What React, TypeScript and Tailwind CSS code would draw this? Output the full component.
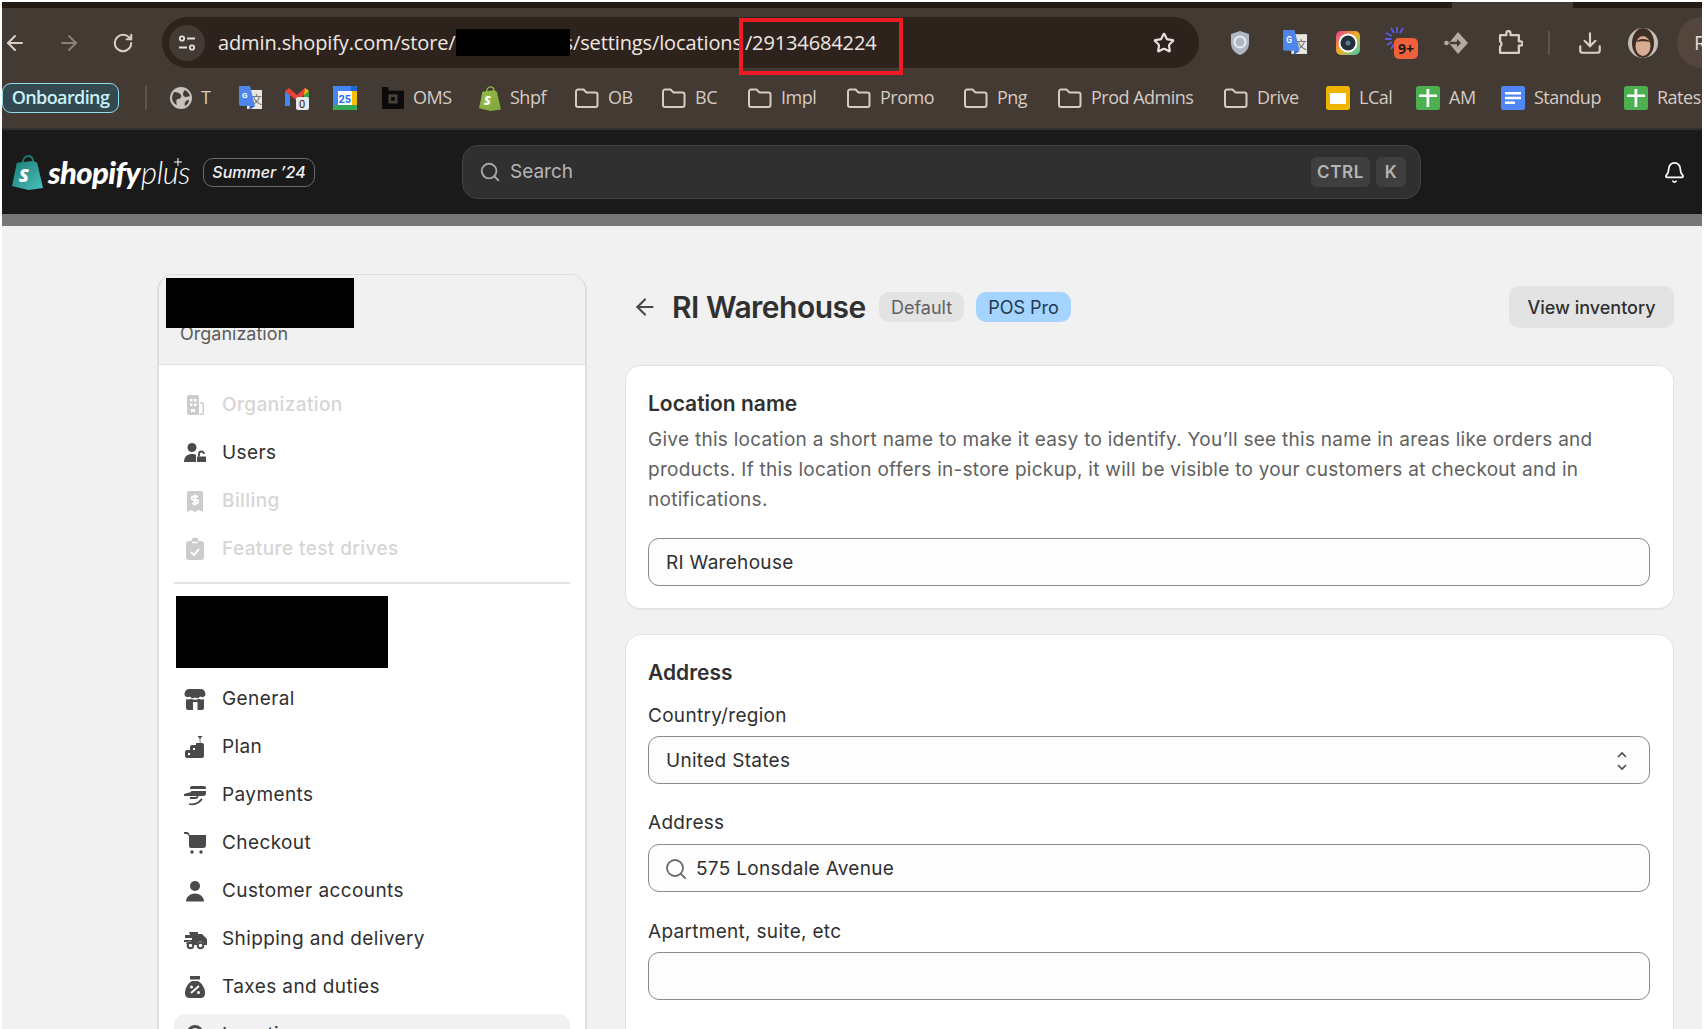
import { ArrowLeft, ArrowRight, Bell, Download, RotateCw, Search, Star } from 'lucide-react';
import type { ReactNode } from 'react';

const Folder = () => (
  <svg viewBox="0 0 24 22" className="w-[25px] h-[22px]" fill="none" stroke="#d6ccc4" strokeWidth="2">
    <path d="M1.5 4.5a2 2 0 0 1 2-2h5.5l3 3h9a2 2 0 0 1 2 2v10.5a2 2 0 0 1-2 2h-17.500a2 2 0 0 1-2-2z" />
  </svg>
);

const Translate = ({ size = 'w-[24px] h-[24px]' }: { size?: string }) => (
  <svg viewBox="0 0 24 24" className={size}>
    <rect x="9" y="4" width="15" height="19" fill="#e9e6e2" />
    <text x="13" y="18" fontSize="11" fill="#666" fontFamily="Noto Sans CJK SC, sans-serif">文</text>
    <path d="M1 0h11l5 20H3a2 2 0 0 1-2-2z" fill="#4f86ec" />
    <path d="M12 20l-1 4 6-4z" fill="#2c5fc0" />
    <text x="4" y="12" fontSize="8" fontWeight="700" fill="#fff" fontFamily="Roboto, sans-serif">G</text>
  </svg>
);

const Gmail = () => (
  <svg viewBox="0 0 24 24" className="w-[24px] h-[24px]">
    <path d="M0 5v15h5V9z" fill="#4285f4" />
    <path d="M0 5l4-3 8 7 8-7 4 3-12 10z" fill="#ea4335" />
    <path d="M19 9l5-4v8h-5z" fill="#34a853" />
    <path d="M20 2l4 3-5 4z" fill="#fbbc04" />
    <rect x="11" y="11" width="13" height="13" rx="2" fill="#e8e8e8" />
    <text x="14" y="22" fontSize="11" fill="#1a1a1a" fontFamily="Roboto, sans-serif">0</text>
  </svg>
);

const Calendar = () => (
  <svg viewBox="0 0 24 24" className="w-[24px] h-[24px]">
    <rect width="24" height="24" rx="2" fill="#fff" />
    <path d="M0 2a2 2 0 0 1 2-2h16v5H0z" fill="#4285f4" />
    <path d="M0 5h5v14H0z" fill="#4285f4" />
    <path d="M19 5h5v14h-5z" fill="#fbbc04" />
    <path d="M18 0h4a2 2 0 0 1 2 2v3h-6z" fill="#1967d2" />
    <path d="M0 19h24v3a2 2 0 0 1-2 2H2a2 2 0 0 1-2-2z" fill="#34a853" />
    <text x="5.500" y="16.500" fontSize="11" fontWeight="700" fill="#1a73e8" fontFamily="Roboto, sans-serif">25</text>
  </svg>
);

// black "b" mark, top right is notched out
const Bits = () => (
  <svg viewBox="0 0 24 24" className="w-[22px] h-[22px]">
    <path d="M0 0h7v4h17v20H0z" fill="#0b0b0b" />
    <rect x="7" y="8" width="10" height="10" fill="#4a4037" />
    <rect x="10" y="11" width="4" height="4" fill="#0b0b0b" />
  </svg>
);

const ShopBag = ({ size, top, bottom }: { size: string; top: string; bottom: string }) => (
  <svg viewBox="0 0 32 36" className={size}>
    <defs>
      <linearGradient id={`bag${top}`} x1="0" y1="0" x2="1" y2="1">
        <stop offset="0" stopColor={top} />
        <stop offset="1" stopColor={bottom} />
      </linearGradient>
    </defs>
    <path d="M11 9c0-4 2-8 6-8s5 4 5 8" fill="none" stroke={top} strokeWidth="2" />
    <path d="M5 8l17-2 4 2 6 26-15 2-17-4z" fill={`url(#bag${top})`} />
    <text x="7" y="28" fontSize="19" fontWeight="800" fill="#fff" fontStyle="italic" fontFamily="Open Sans, sans-serif">S</text>
  </svg>
);

const Square = ({ color, children }: { color: string; children: ReactNode }) => (
  <svg viewBox="0 0 24 24" className="w-[24px] h-[24px]">
    <rect width="24" height="24" rx="2.500" fill={color} />
    {children}
  </svg>
);

const Sheet = () => (
  <Square color="#4caf50">
    <path d="M3 8.500h18v2.500H3z M10.500 3h2.800v18h-2.800z" fill="#fff" />
  </Square>
);

const Globe = () => (
  <svg viewBox="0 0 22 22" className="w-[22px] h-[22px]">
    <circle cx="11" cy="11" r="11" fill="#c9c2bc" />
    <path d="M4 5c3 0 6 1 7 3s-1 4-3 4-2 3-1 6c-3-1-5-4-5-7 0-2 1-4 2-6z M15 3c2 1 4 3 5 6l-4 1c-2 0-3-1-3-3s1-3 2-4z M19 13c0 3-2 5-4 6-1-2 0-4 1-5s2-1 3-1z" fill="#433a33" />
  </svg>
);

const bookmarks: { icon: ReactNode; label: string; w: string }[] = [
  { icon: <Globe />, label: 'T', w: 'w-[68px]' },
  { icon: <Translate />, label: '', w: 'w-[47px]' },
  { icon: <Gmail />, label: '', w: 'w-[48px]' },
  { icon: <Calendar />, label: '', w: 'w-[49px]' },
  { icon: <Bits />, label: 'OMS', w: 'w-[97px]' },
  { icon: <ShopBag size="w-[22px] h-[25px]" top="#95bf47" bottom="#7ea53a" />, label: 'Shpf', w: 'w-[95px]' },
  { icon: <Folder />, label: 'OB', w: 'w-[87px]' },
  { icon: <Folder />, label: 'BC', w: 'w-[86px]' },
  { icon: <Folder />, label: 'Impl', w: 'w-[99px]' },
  { icon: <Folder />, label: 'Promo', w: 'w-[117px]' },
  { icon: <Folder />, label: 'Png', w: 'w-[94px]' },
  { icon: <Folder />, label: 'Prod Admins', w: 'w-[166px]' },
  { icon: <Folder />, label: 'Drive', w: 'w-[103px]' },
  {
    icon: (
      <Square color="#f0b400">
        <rect x="4" y="7" width="16" height="11" fill="#fff" />
      </Square>
    ),
    label: 'LCal',
    w: 'w-[90px]',
  },
  { icon: <Sheet />, label: 'AM', w: 'w-[85px]' },
  {
    icon: (
      <Square color="#4f86f7">
        <path d="M4 6h16v2.500H4z M4 10.800h16v2.500H4z M4 15.600h10v2.500H4z" fill="#fff" />
      </Square>
    ),
    label: 'Standup',
    w: 'w-[123px]',
  },
  { icon: <Sheet />, label: 'Rates', w: 'w-[80px]' },
];

const Ext = ({ w = 'w-[54px]', children }: { w?: string; children: ReactNode }) => (
  <div className={`${w} shrink-0 flex items-center justify-center`}>{children}</div>
);

const Toolbar = () => (
  <div className="h-[70px] pt-[9px] flex items-start">
    <div className="h-[51px] w-[26px] flex items-center justify-center shrink-0">
      <ArrowLeft className="w-[24px] h-[24px] text-[#d9cfc7]" strokeWidth={2} />
    </div>
    <div className="h-[51px] w-[26px] ml-[28px] flex items-center justify-center shrink-0">
      <ArrowRight className="w-[24px] h-[24px] text-[#8a7f77]" strokeWidth={2} />
    </div>
    <div className="h-[51px] w-[26px] ml-[28px] flex items-center justify-center shrink-0">
      <RotateCw className="w-[22px] h-[22px] text-[#d9cfc7]" strokeWidth={2.2} />
    </div>
    <div className="relative ml-[26px] w-[1037px] h-[51px] shrink-0 rounded-full bg-[#2e231c] flex items-center pl-[7px]">
      <div className="w-[36px] h-[36px] rounded-full bg-[#433a33] flex items-center justify-center shrink-0">
        <svg viewBox="0 0 20 20" className="w-[20px] h-[20px]" fill="none" stroke="#e6ded8" strokeWidth="1.800">
          <circle cx="5" cy="5.500" r="2.200" />
          <path d="M10 5.500h8 M2 14.500h8" />
          <circle cx="15" cy="14.500" r="2.200" />
        </svg>
      </div>
      <div className="ml-[13px] flex items-center font-['Open_Sans',sans-serif] text-[20px] tracking-[-0.12px] text-[#eee8e3] whitespace-nowrap">
        <span>admin.shopify.com/store/</span>
        <span className="w-[114px] h-[27px] bg-black -mr-[6px] relative z-10" />
        <span>s/settings/locations</span>
        <span className="ml-[3px]">/29134684224</span>
      </div>
      <Star className="absolute left-[991px] w-[22px] h-[22px] text-[#e6ded8]" strokeWidth={2.4} />
      <div className="absolute left-[577px] top-[1px] w-[164px] h-[57px] border-[4px] border-[#ed1c24]" />
    </div>
    <div className="h-[51px] ml-[14px] flex items-center">
      <Ext>
        <svg viewBox="0 0 20 24" className="w-[20px] h-[24px]">
          <path d="M10 0l9 3v9c0 6-4 10-9 12-5-2-9-6-9-12V3z" fill="#aeb6c4" />
          <circle cx="10" cy="11" r="5.500" fill="none" stroke="#e8ebf0" strokeWidth="2" />
        </svg>
      </Ext>
      <Ext>
        <Translate size="w-[25px] h-[25px]" />
      </Ext>
      <Ext>
        <svg viewBox="0 0 24 24" className="w-[24px] h-[24px]">
          <defs>
            <linearGradient id="cam" x1="0" y1="0" x2="1" y2="1">
              <stop offset="0" stopColor="#e93a9b" />
              <stop offset="0.500" stopColor="#f2b01e" />
              <stop offset="1" stopColor="#2fd0b5" />
            </linearGradient>
          </defs>
          <rect width="24" height="24" rx="5" fill="url(#cam)" />
          <circle cx="12" cy="12" r="9.500" fill="#fff" />
          <circle cx="12" cy="12" r="7.500" fill="#23303a" />
          <circle cx="12" cy="12" r="2.500" fill="#5b7a8c" />
        </svg>
      </Ext>
      <Ext>
        <div className="relative w-[34px] h-[34px]">
          <svg viewBox="0 0 24 24" className="w-[24px] h-[24px] absolute left-0 top-0" fill="none" stroke="#5a5cf0" strokeWidth="1.800">
            <path d="M12 7V1 M15 7l3-5 M9 7L6 2 M7 10L1 7 M6.500 13H0 M7 16l-5 3 M9 18l-3 5" />
          </svg>
          <div className="absolute left-[9px] top-[12px] w-[24px] h-[21px] rounded-[5px] bg-[#f0603a] flex items-center justify-center text-[14px] font-bold text-[#1a1a1a] font-['Open_Sans',sans-serif]">
            9+
          </div>
        </div>
      </Ext>
      <Ext>
        <svg viewBox="0 0 24 24" className="w-[24px] h-[24px]">
          <path d="M14 1l10 11-10 11-9-11z" fill="#b3aaa3" />
          <path d="M6 10.800h7V8l4 4-4 4v-2.800H6z" fill="#433a33" />
          <circle cx="2.500" cy="12" r="2.300" fill="#b3aaa3" />
        </svg>
      </Ext>
      <Ext>
        <svg viewBox="0 0 24 24" className="w-[25px] h-[25px]" fill="none" stroke="#d9cfc7" strokeWidth="2.200" strokeLinejoin="round">
          <path d="M2 5h6V3a2 2 0 0 1 4 0v2h8v6h1.500a2 2 0 0 1 0 4H20v7H2v-6a3 3 0 0 0 0-5z" />
        </svg>
      </Ext>
      <Ext w="w-[24px]">
        <div className="w-[2px] h-[24px] bg-[#5e544c]" />
      </Ext>
      <Ext w="w-[58px]">
        <Download className="w-[26px] h-[26px] text-[#d9cfc7]" strokeWidth={2} />
      </Ext>
      <Ext w="w-[48px]">
        <svg viewBox="0 0 30 30" className="w-[30px] h-[30px]">
          <clipPath id="face">
            <circle cx="15" cy="15" r="15" />
          </clipPath>
          <g clipPath="url(#face)">
            <rect width="30" height="30" fill="#c4beb4" />
            <ellipse cx="15" cy="15" rx="11" ry="15" fill="#3f2e24" />
            <ellipse cx="15" cy="18" rx="7.500" ry="10" fill="#d9ab92" />
            <path d="M8 14c2-4 12-4 14 0-4-1-10-1-14 0z" fill="#3f2e24" />
          </g>
        </svg>
      </Ext>
      <div className="ml-[10px] w-[25px] h-[51px] rounded-l-full bg-[#54463c] overflow-hidden flex items-center pl-[17px] text-[20px] text-[#e6ded8] font-['Open_Sans',sans-serif]">
        R
      </div>
    </div>
  </div>
);

const Bookmarks = () => (
  <div className="h-[52px] pt-[5px] flex items-start border-b-[2px] border-[#34302c]">
    <div className="h-[30px] w-[117px] pb-[2px] shrink-0 rounded-[9px] border-[1.5px] border-[#8fdcec] bg-[#33484f] flex items-center justify-center font-['Open_Sans',sans-serif] font-semibold text-[18px] tracking-[-0.6px] text-[#c9f1fa]">
      Onboarding
    </div>
    <div className="ml-[26px] mr-[23px] mt-[3px] w-[2px] h-[24px] bg-[#5e544c] shrink-0" />
    {bookmarks.map((b, i) => (
      <div key={i} className={`${b.w} h-[30px] shrink-0 flex items-center gap-[9px] whitespace-nowrap`}>
        {b.icon}
        {b.label && <span className="-mt-[2px] font-['Open_Sans',sans-serif] text-[18px] tracking-[-0.5px] text-[#d6ccc4]">{b.label}</span>}
      </div>
    ))}
  </div>
);

const TopBar = () => (
  <div className="h-[84px] bg-[#1a1a1a] flex items-center">
    <div className="ml-[10px] flex items-center w-[450px] shrink-0">
      <div className="relative w-[191px] shrink-0 flex items-center">
        <ShopBag size="w-[31px] h-[35px]" top="#1f7a74" bottom="#47c2be" />
        <span className="ml-[5px] font-['Lato',sans-serif] font-black italic text-[31px] tracking-[-0.6px] text-white">shopify</span>
        <span className="ml-[1px] font-['Lato',sans-serif] font-light italic text-[31px] tracking-[-0.4px] text-white">plus</span>
        <svg viewBox="0 0 8 8" className="absolute left-[162px] top-[9px] w-[8px] h-[8px]" stroke="#fff" strokeWidth="1">
          <path d="M4 0v8 M0 4h8" />
        </svg>
      </div>
      <div className="w-[112px] h-[29px] rounded-[10px] border border-[#6a6a6a] flex items-center justify-center italic font-medium text-[16px] text-[#f1f1f1] whitespace-nowrap">
        Summer ’24
      </div>
    </div>
    <div className="w-[959px] h-[54px] rounded-[16px] bg-[#303030] border border-[#424242] flex items-center pl-[16px] pr-[14px]">
      <Search className="w-[22px] h-[22px] text-[#a8a8a8]" strokeWidth={2} />
      <span className="ml-[9px] pt-[1px] text-[19px] text-[#b5b5b5]">Search</span>
      <div className="ml-auto flex gap-[6px] text-[17px] font-semibold tracking-[0.6px] text-[#b5b5b5]">
        <div className="w-[59px] h-[30px] pt-[2px] rounded-[6px] bg-[#3f3f3f] flex items-center justify-center">CTRL</div>
        <div className="w-[30px] h-[30px] pt-[2px] rounded-[6px] bg-[#3f3f3f] flex items-center justify-center">K</div>
      </div>
    </div>
    <Bell className="ml-[242px] w-[23px] h-[23px] text-white" strokeWidth={1.8} />
  </div>
);

const I = ({ children }: { children: ReactNode }) => (
  <svg viewBox="0 0 24 24" className="w-[24px] h-[24px]" fill="currentColor">
    {children}
  </svg>
);

const icons: Record<string, ReactNode> = {
  Organization: (
    <I>
      <path fillRule="evenodd" d="M4 4a2 2 0 0 1 2-2h8a2 2 0 0 1 2 2v18H6a2 2 0 0 1-2-2z M7 6v2.500h2.500V6z M11 6v2.500h2.500V6z M7 10.500V13h2.500v-2.500z M11 10.500V13h2.500v-2.500z M8 16v3h4v-3z" />
      <path d="M17 9h1.500A2 2 0 0 1 21 11v9a2 2 0 0 1-2 2h-2v-1.500h2.500v-10H17z" />
    </I>
  ),
  Users: (
    <I>
      <circle cx="9" cy="6.500" r="4.500" />
      <path d="M1 21c0-5 3-8 8-8 2 0 3 .4 4 1v7z" />
      <path d="M14 15.500h9V21h-9z" />
      <path d="M16 15.500V13a2.500 2.500 0 0 1 5 0" fill="none" stroke="currentColor" strokeWidth="1.800" />
    </I>
  ),
  Billing: (
    <I>
      <path d="M4 4a2 2 0 0 1 2-2h12a2 2 0 0 1 2 2v19l-4-2-4 2-4-2-4 2z" />
      <path d="M15 7.500h-4.500a1.700 1.700 0 0 0 0 3.500h3a1.700 1.700 0 0 1 0 3.500H9 M12 5.500v11" fill="none" stroke="#fff" strokeWidth="1.800" />
    </I>
  ),
  'Feature test drives': (
    <I>
      <path d="M6 4h2.500a3.500 3.500 0 0 1 7 0H18a3 3 0 0 1 3 3v13a3 3 0 0 1-3 3H6a3 3 0 0 1-3-3V7a3 3 0 0 1 3-3z" />
      <path d="M8 15l3 3 5-6" fill="none" stroke="#fff" strokeWidth="2" />
      <path d="M9 5.500h6" stroke="#fff" strokeWidth="1.500" />
    </I>
  ),
  General: (
    <I>
      <path d="M6 2h12c3 0 4.500 3 4.500 6a3.500 3.500 0 0 1-5.300 1.500 4 4 0 0 1-5.200 1 4 4 0 0 1-5.200-1A3.500 3.500 0 0 1 1.500 8C1.500 5 3 2 6 2z" />
      <path fillRule="evenodd" d="M3 12c2 .8 3.500.6 4.800-.2 2.600 1.400 5.800 1.400 8.400 0 1.300.8 2.800 1 4.800.2v9a2 2 0 0 1-2 2H5a2 2 0 0 1-2-2z M10 15v8h4.500v-8z" />
    </I>
  ),
  Plan: (
    <I>
      <path d="M2 17a2 2 0 0 1 2-2h3v-3a2 2 0 0 1 2-2h4V8h6a2 2 0 0 1 2 2v11a2 2 0 0 1-2 2H4a2 2 0 0 1-2-2z" />
      <path d="M14.500 1h5l-2.500 3z" />
      <path d="M16.700 3h.7v5h-.7z" />
      <path d="M5 18h2v2H5z M10 13h2v2h-2z" fill="#fff" />
    </I>
  ),
  Payments: (
    <I>
      <path d="M9 3h12a2 2 0 0 1 2 2v1H7V5a2 2 0 0 1 2-2z M8 8h15v2a3 3 0 0 1-3 3h-3c-1 0-2 0-3 0v-1H9z" />
      <path d="M1 12h12c2 0 2 3 0 3H7 M1 12c4-1 6-2 8-2 M6 21c4 1 7 0 10-2l3-3" fill="none" stroke="currentColor" strokeWidth="1.800" />
    </I>
  ),
  Checkout: (
    <I>
      <path d="M1 1h3a2 2 0 0 1 2 1.500L6.500 4H23v10a3 3 0 0 1-3 3H8a2 2 0 0 1-2-2V5L4 3H2a1 1 0 0 1-1-1z" />
      <circle cx="9" cy="21" r="1.700" />
      <circle cx="18" cy="21" r="1.700" />
    </I>
  ),
  'Customer accounts': (
    <I>
      <circle cx="12" cy="7" r="5" />
      <path d="M3 22.500c0-4 3.500-8 9-8s9 4 9 8z" />
    </I>
  ),
  'Shipping and delivery': (
    <I>
      <path d="M6 5h9l0 2h4l5 5v6h-3a3.500 3.500 0 0 0-7 0h-4a3.500 3.500 0 0 0-7 0H3v-1h5v-2H1v-2h8v-2H2V8h5z" />
      <circle cx="7.500" cy="18.500" r="2.800" fill="none" stroke="currentColor" strokeWidth="2" />
      <circle cx="17.500" cy="18.500" r="2.800" fill="none" stroke="currentColor" strokeWidth="2" />
    </I>
  ),
  'Taxes and duties': (
    <I>
      <path d="M7 1h10v3.500H7z" />
      <path fillRule="evenodd" d="M9 6h6c5 3 7 8 7 12s-2 5-5 5H7c-3 0-5-1-5-5s2-9 7-12z" />
      <path d="M8 18l8-7" stroke="#fff" strokeWidth="1.800" />
      <circle cx="8.500" cy="12" r="1.500" fill="#fff" />
      <circle cx="15.500" cy="17.500" r="1.500" fill="#fff" />
    </I>
  ),
  Locations: (
    <I>
      <path d="M12 2a8 8 0 0 0-8 8c0 5 5 10 8 13 3-3 8-8 8-13a8 8 0 0 0-8-8zm0 3a5 5 0 1 1 0 10 5 5 0 0 1 0-10z" />
    </I>
  ),
};

const NavRow = ({ label, disabled, active }: { label: string; disabled?: boolean; active?: boolean }) => (
  <div className={`h-[42px] rounded-[11px] flex items-center shrink-0 ${active ? 'bg-[#f1f1f1]' : ''}`}>
    <div className={`w-[24px] h-[24px] ml-[9px] ${disabled ? 'text-[#cccccc]' : 'text-[#4a4a4a]'}`}>{icons[label]}</div>
    <span className={`ml-[15px] text-[19px] tracking-[0.4px] ${disabled ? 'text-[#d6d6d6] font-medium' : 'text-[#303030]'}`}>{label}</span>
  </div>
);

const Sidebar = () => (
  <div className="w-[430px] shrink-0 h-[900px] rounded-t-[17px] border-x-2 border-t border-[#dedede] bg-white overflow-hidden">
    <div className="relative h-[90px] bg-[#f1f1f1] border-b border-[#e0e0e0]">
      <div className="absolute left-[7px] top-[3px] w-[188px] h-[50px] bg-black" />
      <div className="pl-[21px] pt-[46px] text-[18px] leading-[26px] text-[#5c5c5c]">Organization</div>
    </div>
    <div className="px-[15px] pt-[19px] flex flex-col gap-[6px]">
      <NavRow label="Organization" disabled />
      <NavRow label="Users" />
      <NavRow label="Billing" disabled />
      <NavRow label="Feature test drives" disabled />
      <div className="mt-[6px] h-[2px] bg-[#e3e3e3] shrink-0" />
      <div className="mt-[6px] mb-[4px] ml-[2px] w-[212px] h-[72px] bg-black shrink-0" />
      <NavRow label="General" />
      <NavRow label="Plan" />
      <NavRow label="Payments" />
      <NavRow label="Checkout" />
      <NavRow label="Customer accounts" />
      <NavRow label="Shipping and delivery" />
      <NavRow label="Taxes and duties" />
      <NavRow label="Locations" active />
    </div>
  </div>
);

const fieldClass =
  'h-[48px] rounded-[11px] border border-[#8a8a8a] bg-[#fdfdfd] flex items-center px-[17px] pt-[2px] text-[19px] tracking-[0.3px] text-[#303030]';

const Main = () => (
  <div className="w-[1049px] shrink-0 pt-[12px]">
    <div className="h-[42px] flex items-center">
      <ArrowLeft className="ml-[7px] w-[26px] h-[26px] text-[#4a4a4a]" strokeWidth={2} />
      <h1 className="ml-[14px] w-[194px] text-[30px] font-semibold tracking-[-0.5px] text-[#303030] whitespace-nowrap">RI Warehouse</h1>
      <span className="ml-[13px] h-[30px] w-[85px] rounded-[10px] bg-[#e3e3e3] flex items-center justify-center text-[18px] text-[#616161]">Default</span>
      <span className="ml-[12px] h-[30px] w-[95px] rounded-[10px] bg-[#a4d4ff] flex items-center justify-center text-[18px] text-[#1f3a52]">POS Pro</span>
      <button className="ml-auto h-[42px] w-[165px] rounded-[10px] bg-[#e3e3e3] text-[18px] font-medium text-[#303030]">View inventory</button>
    </div>

    <section className="mt-[37px] h-[245px] rounded-[16px] bg-white border border-[#e3e3e3] border-b-2 pt-[26px] pl-[22px] pr-[23px]">
      <h2 className="text-[21px] leading-[24px] font-semibold text-[#303030]">Location name</h2>
      <p className="mt-[9px] text-[19px] leading-[30px] tracking-[0.28px] text-[#616161]">
        Give this location a short name to make it easy to identify. You’ll see this name in areas like orders and products. If this location offers in-store pickup, it will be visible to your customers at checkout and in notifications.
      </p>
      <div className={`mt-[23px] ${fieldClass}`}>RI Warehouse</div>
    </section>

    <section className="mt-[24px] h-[500px] rounded-[16px] bg-white border border-[#e3e3e3] pt-[26px] pl-[22px] pr-[23px]">
      <h2 className="text-[21px] leading-[24px] font-semibold text-[#303030]">Address</h2>
      <div className="mt-[19px] text-[19px] leading-[24px] tracking-[0.3px] text-[#303030]">Country/region</div>
      <div className={`mt-[8px] justify-between ${fieldClass}`}>
        United States
        <svg viewBox="0 0 12 24" className="w-[12px] h-[24px] mr-[4px]" fill="none" stroke="#4a4a4a" strokeWidth="1.600">
          <path d="M2 8l4-4 4 4 M2 16l4 4 4-4" />
        </svg>
      </div>
      <div className="mt-[27px] text-[19px] leading-[24px] tracking-[0.3px] text-[#303030]">Address</div>
      <div className={`mt-[9px] gap-[8px] ${fieldClass}`}>
        <Search className="w-[24px] h-[24px] -ml-[2px] text-[#6b6b6b] shrink-0" strokeWidth={1.8} />
        575 Lonsdale Avenue
      </div>
      <div className="mt-[28px] text-[19px] leading-[24px] tracking-[0.3px] text-[#303030]">Apartment, suite, etc</div>
      <div className={`mt-[8px] ${fieldClass}`} />
    </section>
  </div>
);

export default function App() {
  return (
    <div className="h-[1029px] w-[1704px] overflow-hidden bg-white pt-[2px] px-[2px] font-['Inter',sans-serif]">
      <div className="h-[6px] bg-[#241b14] flex">
        <div className="w-[1450px]" />
        <div className="w-[121px] bg-[#433a33]" />
      </div>
      <div className="bg-[#433a33]">
        <Toolbar />
        <Bookmarks />
      </div>
      <TopBar />
      <div className="h-[12px] bg-[#767676]" />
      <div className="h-[803px] bg-[#f1f1f1] overflow-hidden flex pl-[155px] pt-[48px] gap-[38px]">
        <Sidebar />
        <Main />
      </div>
    </div>
  );
}
